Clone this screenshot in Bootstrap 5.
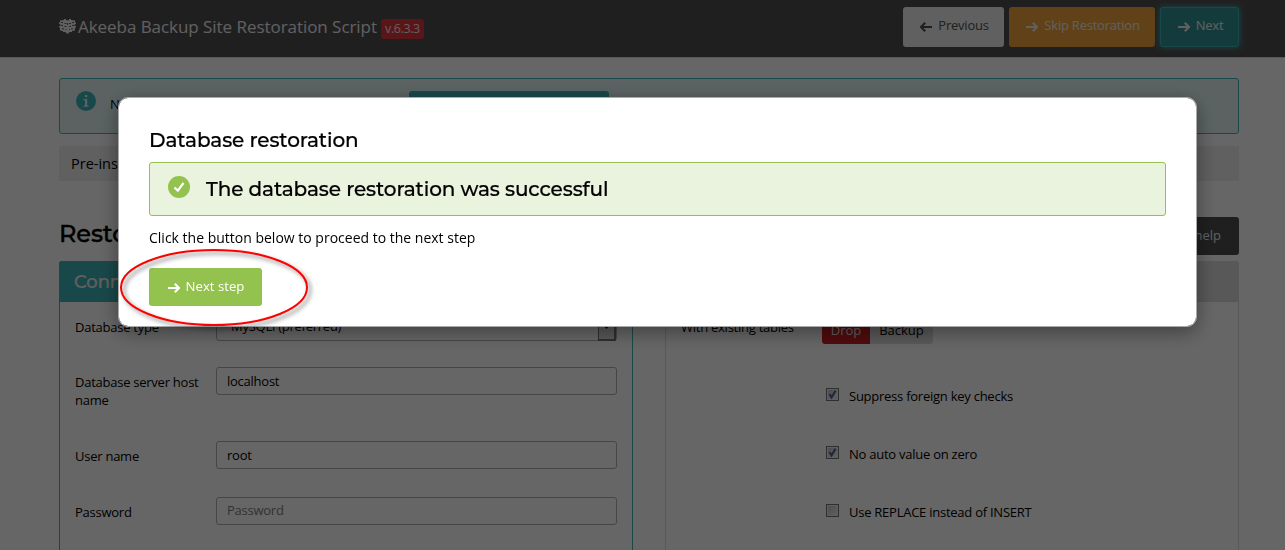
<!DOCTYPE html>
<html lang="en">
<head>
<meta charset="utf-8">
<meta name="viewport" content="width=device-width, initial-scale=1">
<title>Akeeba Backup Site Restoration Script</title>
<link href="https://cdn.jsdelivr.net/npm/bootstrap@5.3.0/dist/css/bootstrap.min.css" rel="stylesheet">
<script src="https://cdn.jsdelivr.net/npm/bootstrap@5.3.0/dist/js/bootstrap.bundle.min.js" defer></script>
<style>
:root{--teal:#40b5b8;--dark:#514f50;--green:#93c34e}
body{font-family:"Open Sans","Noto Sans",sans-serif;font-size:13px;line-height:18px;color:#000;height:550px;overflow:hidden;background:#fff}
.mont{font-family:Montserrat,Inter,sans-serif;font-weight:500;letter-spacing:-.11px;-webkit-text-stroke:.2px currentColor}
.page-wrap{width:1180px;margin-left:59px}
.topbar{height:57px;background:var(--dark);box-shadow:0 1px 0 #d9d9d9;color:#efefef}
.topbar .page-wrap{padding-top:7px}
.brand{font-size:17px;line-height:24px;padding-top:8px;letter-spacing:-.05px}
.brand-icon{margin:12px 2px 0 0}
.ver{font-size:12.5px;letter-spacing:-.4px;background:#e2363c;border-radius:3px;height:20px;line-height:20px;width:43px;margin:12px 0 0 4px;text-align:center}
.btn-ak{--bs-btn-font-size:13px;--bs-btn-line-height:18px;--bs-btn-border-radius:3px;--bs-btn-padding-x:0;--bs-btn-padding-y:0;--bs-btn-border-width:0;display:inline-flex;align-items:center;justify-content:center;gap:6px}
.btn-ak svg{margin-top:3px}
.flip{transform:scaleX(-1)}
.btn-gap{gap:5px}
.topbar .btn-ak{height:40px;padding:0 0 4px 2px;letter-spacing:-.22px}
.b-prev,.b-prev:hover{width:101px;background:#efefef;color:var(--dark)}
.b-skip,.b-skip:hover{width:146px;background:#f0a43c;color:#efefef}
.b-next,.b-next:hover{width:79px;background:#349597;color:#efefef;border:1px solid var(--teal);box-shadow:0 0 6px var(--teal)}
.info-box{height:56px;margin:21px 0 12px;border:1px solid var(--teal);border-radius:3px;background:#e6f6f6;padding:12px 16px}
.info-text{margin:4px 0 0 14px}
.info-box .btn-ak{width:200px;height:30px;background:var(--teal);color:#fff;margin-left:auto;margin-right:613px}
.crumbs{height:35px;background:#efefef;padding:0 12px;font-size:14.5px;line-height:35px}
.head-row{height:38px;margin:36px 0 6px}
.head-row h3{font-size:24px;line-height:32px;margin:1px 0 0;-webkit-text-stroke-width:.4px}
.help-btn,.help-btn:hover{width:136px;background:var(--dark);color:#efefef;justify-content:flex-end;padding:0 18px 2px 0}
.panel{border:1px solid #ddd;border-bottom:0;border-radius:3px 3px 0 0;height:289px}
.panel header{height:41px;margin:-1px -1px 0;background:#ddd;border-radius:3px 3px 0 0;padding:0 15px;font-size:18px;line-height:42px}
.panel.p-teal{border-color:var(--teal)}
.p-teal header{background:var(--teal);color:#efefef}
.panel-l{width:574px}.panel-r{width:574px}
.fields{display:grid;grid-template-columns:141px 401px;grid-template-rows:54px 74px 56px 50px;padding:11px 15px 0}
.fields label{padding-top:6px;font-size:13px;letter-spacing:-.25px}
.fields label:first-child{padding-top:5px}
.fields .form-control,.fake-select{height:28px;border:1px solid #b0b0b0;border-radius:3px;font-size:13px;padding:0 10px 1px 10px;color:#000;background:#fff;line-height:18px;letter-spacing:-.25px}
.fields .form-control::placeholder{color:#808080}
.fields .form-control:placeholder-shown{padding-bottom:3px}
.fields .fake-select{padding:3px 0 0 14px;position:relative}
.fake-select i{position:absolute;right:0;top:1px;width:18px;height:26px;border:1px solid #777;border-right-width:2px;border-bottom-width:2px;background:#ddd;display:flex;align-items:center;justify-content:center}
.opts{padding:10px 14px 0 15px;letter-spacing:-.25px}
.opt-row{height:75px}
.opt-label{width:141px;padding-top:6px}
.tog{height:28px;line-height:28px;text-align:center;margin-top:4px}
.tog-on{width:48px;background:#c81e23;color:#efefef;border-radius:3px 0 0 3px;letter-spacing:0}
.tog-off{width:63px;background:#ddd;border-radius:0 3px 3px 0;letter-spacing:0}
.chk{height:58px;padding-left:145px}
.chk:last-child{height:30px}
.chk .box{width:13px;height:13px;border:1px solid #777;background:linear-gradient(135deg,#bcbcc2,#f4f4f4);box-shadow:inset 0 0 0 1px #eee;margin-right:10px;margin-top:1px}
.modal-backdrop{--bs-backdrop-opacity:.6}
.modal{overflow:hidden}
.modal .modal-dialog{margin:97px 0 0 118px;width:1079px;max-width:none}
.modal .modal-content{height:230px;border:1px solid #aaa;border-radius:10px;padding:29px 30px 0;box-shadow:0 5px 20px rgba(0,0,0,.4)}
.modal-content>*{flex-shrink:0}
.modal h3{font-size:20px;line-height:26px;margin:0 0 9px}
.modal .ok-box{height:54px;border:1px solid var(--green);border-radius:3px;background:#eaf3de;padding-left:18px}
.ok-box svg{margin-top:-5px;margin-right:16px}
.modal .ok-box h3{margin:0}
.modal p{font-size:14px;line-height:20px;margin:12px 0 20px}
.b-step,.b-step:hover{width:113px;height:38px;background:var(--green);color:#fff;font-size:13.2px;padding:0 0 2px 1px}
.ring{position:absolute;left:112px;top:241px;z-index:1060;pointer-events:none}
.ring ellipse{filter:drop-shadow(3px 3px 2px rgba(0,0,0,.5))}
</style>
</head>
<body>
<svg width="0" height="0" class="position-absolute"><defs>
<symbol id="arr" viewBox="0 0 12 12"><path d="M0 6H10.500M6.800 1.800L11 6L6.800 10.200" fill="none" stroke="currentColor" stroke-width="2.100"/></symbol></defs></svg>

<nav class="topbar"><div class="page-wrap d-flex">
<div class="d-flex me-auto">
<svg class="brand-icon" width="17" height="16" viewBox="0 0 17 16" fill="#efefef"><path d="M1 1.500L5 1V0H7V1L8.500 1.500L10 1V0H12V1L16 1.500V3.500H17V5L15.500 5.500V7H17V8.500H16V11.500L13 12V13H10.500L9.500 14.500H7.500L6.500 13H4V12L1 11.500V8.500H0V7H1.500V5.500L0 5V3.500H1Z"/><path d="M2 3.500H4M5.500 4.500H7.500M10 4.500H12M13 3.500H15M2 6.500H4M5.500 7.500H7.500M10 7.500H12M13 6.500H15M3 9.800H5M12 9.800H14M8.700 4V6M6.500 10.500H7.500M10 10.500H11" stroke="#514f50" stroke-width=".9"/></svg>
<span class="brand">Akeeba Backup Site Restoration Script</span><span class="ver">v.6.3.3</span></div>
<div class="d-flex btn-gap">
<button class="btn btn-ak b-prev"><svg class="flip" width="12" height="12"><use href="#arr"/></svg><span>Previous</span></button>
<button class="btn btn-ak b-skip"><svg width="12" height="12"><use href="#arr"/></svg><span>Skip Restoration</span></button>
<button class="btn btn-ak b-next"><svg width="12" height="12"><use href="#arr"/></svg><span>Next</span></button>
</div></div></nav>

<main class="page-wrap">
<div class="info-box d-flex">
<svg width="20" height="20" viewBox="0 0 20 20"><circle cx="10" cy="10" r="10" fill="#40b5b8"/><path d="M9 4H11.200V6.200H9ZM7.500 8H11.200V14.500H12.500V15.800H7.500V14.500H9V9.300H7.500Z" fill="#e6f6f6"/></svg>
<span class="info-text">No</span>
<button class="btn btn-ak" aria-label="Read more"></button></div>
<div class="crumbs">Pre-installation</div>
<div class="head-row d-flex justify-content-between"><h3 class="mont">Restore</h3><button class="btn btn-ak help-btn">Show / hide help</button></div>
<div class="d-flex justify-content-between">
<section class="panel p-teal panel-l"><header class="mont">Connection</header>
<div class="fields">
<label>Database type</label><div class="fake-select">MySQLi (preferred)<i><svg width="7" height="5"><path d="M0 0H7L3.500 4Z"/></svg></i></div>
<label>Database server host name</label><input class="form-control" value="localhost">
<label>User name</label><input class="form-control" value="root">
<label>Password</label><input class="form-control" placeholder="Password">
</div></section>
<section class="panel panel-r"><header class="mont"></header>
<div class="opts">
<div class="d-flex opt-row"><span class="opt-label">With existing tables</span><span class="tog tog-on">Drop</span><span class="tog tog-off">Backup</span></div>
<div class="chk d-flex"><span class="box"><svg class="d-block" width="11" height="11" viewBox="0 0 11 11"><path d="M2.500 5L4.500 8.500L8.500 1.800" fill="none" stroke="#4b5f97" stroke-width="2"/></svg></span>Suppress foreign key checks</div>
<div class="chk d-flex"><span class="box"><svg class="d-block" width="11" height="11" viewBox="0 0 11 11"><path d="M2.500 5L4.500 8.500L8.500 1.800" fill="none" stroke="#4b5f97" stroke-width="2"/></svg></span>No auto value on zero</div>
<div class="chk d-flex"><span class="box"></span>Use REPLACE instead of INSERT</div>
</div></section>
</div>
</main>

<div class="modal-backdrop show"></div>
<div class="modal d-block"><div class="modal-dialog"><div class="modal-content">
<h3 class="mont">Database restoration</h3>
<div class="ok-box d-flex align-items-center"><svg width="22" height="22" viewBox="0 0 22 22"><circle cx="11" cy="11" r="11" fill="#93c34e"/><path d="M6.500 11.500L9.800 14.700L15.500 7" fill="none" stroke="#fff" stroke-width="2.200"/></svg><h3 class="mont">The database restoration was successful</h3></div>
<p>Click the button below to proceed to the next step</p>
<button class="btn btn-ak b-step"><svg width="12" height="12"><use href="#arr"/></svg><span>Next step</span></button>
</div></div></div>
<svg class="ring" width="206" height="94" viewBox="0 0 206 94"><ellipse cx="102" cy="46.500" rx="93" ry="37.500" fill="none" stroke="red" stroke-width="2"/></svg>
</body>
</html>
